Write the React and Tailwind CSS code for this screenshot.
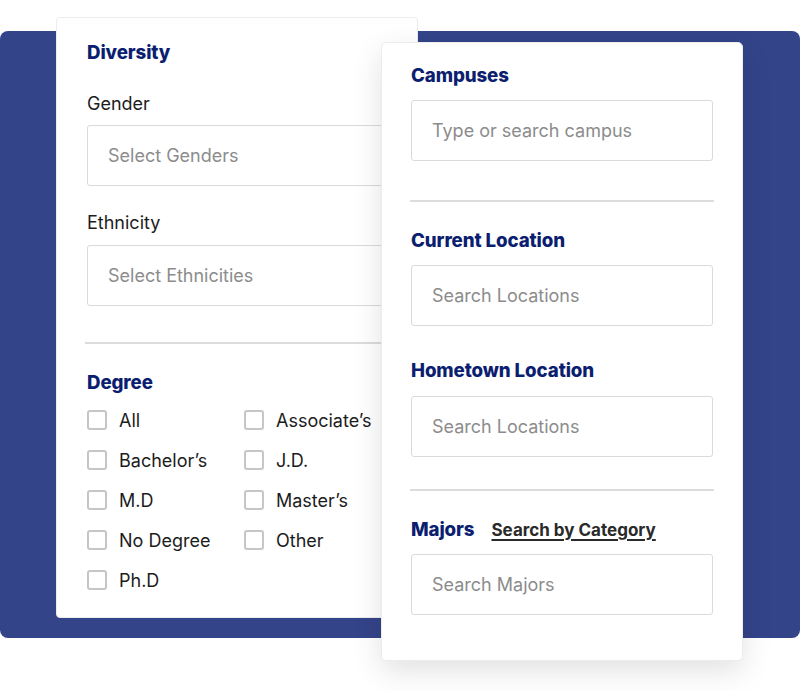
import React from 'react';

const font = { fontFamily: 'Inter, "Liberation Sans", sans-serif' };

function Field({ placeholder, className = '' }) {
  return (
    <div className={`h-[61px] border border-[#dadada] rounded-[3px] bg-white flex items-center px-[20px] text-[18px] text-[#8c8c8c] ${className}`}>
      {placeholder}
    </div>
  );
}

function Heading({ children, className = '' }) {
  return <div className={`text-[18.7px] leading-[22px] font-extrabold tracking-[-0.1px] text-[#0b1e6f] ${className}`}>{children}</div>;
}

function Check({ label }) {
  return (
    <div className="h-[40px] flex items-center gap-[12px]">
      <span className="w-[20px] h-[20px] border-2 border-[#c6c6c6] rounded-[3px] bg-white" />
      <span className="text-[18px] text-[#1c1c1c]">{label}</span>
    </div>
  );
}

export default function App() {
  const degrees = ['All', 'Associate’s', 'Bachelor’s', 'J.D.', 'M.D', 'Master’s', 'No Degree', 'Other', 'Ph.D'];

  return (
    <div className="relative w-[800px] h-[691px] bg-white overflow-hidden" style={font}>
      {/* blue backdrop */}
      <div className="absolute left-0 top-[31px] w-[800px] h-[607px] bg-[#334489] rounded-[8px]" />

      {/* left card */}
      <div className="absolute left-[56px] top-[17px] w-[362px] h-[601px] bg-white rounded-[4px] border border-[#ececec] pl-[30px] pr-[30px] pt-[24px]">
        <Heading>Diversity</Heading>
        <div className="mt-[29px] text-[18px] leading-[22px] text-[#1c1c1c]">Gender</div>
        <Field placeholder="Select Genders" className="mt-[10px]" />
        <div className="mt-[26px] text-[18px] leading-[22px] text-[#1c1c1c]">Ethnicity</div>
        <Field placeholder="Select Ethnicities" className="mt-[11px]" />
        <div className="mt-[36px] border-t-2 border-[#dcdcdc] -ml-[2px]" />
        <Heading className="mt-[28px]">Degree</Heading>
        <div className="mt-[6px] grid grid-cols-[157px_1fr]">
          {degrees.map((d) => (
            <Check key={d} label={d} />
          ))}
        </div>
      </div>

      {/* right card */}
      <div className="absolute left-[381px] top-[42px] w-[362px] h-[619px] bg-white rounded-[5px] border border-[#ececec] shadow-[0_10px_30px_rgba(0,0,0,0.12)] pl-[29px] pr-[29px] pt-[22px]">
        <Heading>Campuses</Heading>
        <Field placeholder="Type or search campus" className="mt-[13px]" />
        <div className="mt-[39px] border-t-2 border-[#dcdcdc] -mx-[1px]" />
        <Heading className="mt-[28px]">Current Location</Heading>
        <Field placeholder="Search Locations" className="mt-[13px]" />
        <Heading className="mt-[34px]">Hometown Location</Heading>
        <Field placeholder="Search Locations" className="mt-[14px]" />
        <div className="mt-[32px] border-t-2 border-[#dcdcdc] -mx-[1px]" />
        <div className="mt-[28px] flex items-baseline gap-[17px]">
          <Heading>Majors</Heading>
          <span className="text-[17px] leading-[22px] font-bold text-[#2a2a2a] underline underline-offset-[3px] decoration-[1.5px]">Search by Category</span>
        </div>
        <Field placeholder="Search Majors" className="mt-[13px]" />
      </div>
    </div>
  );
}
